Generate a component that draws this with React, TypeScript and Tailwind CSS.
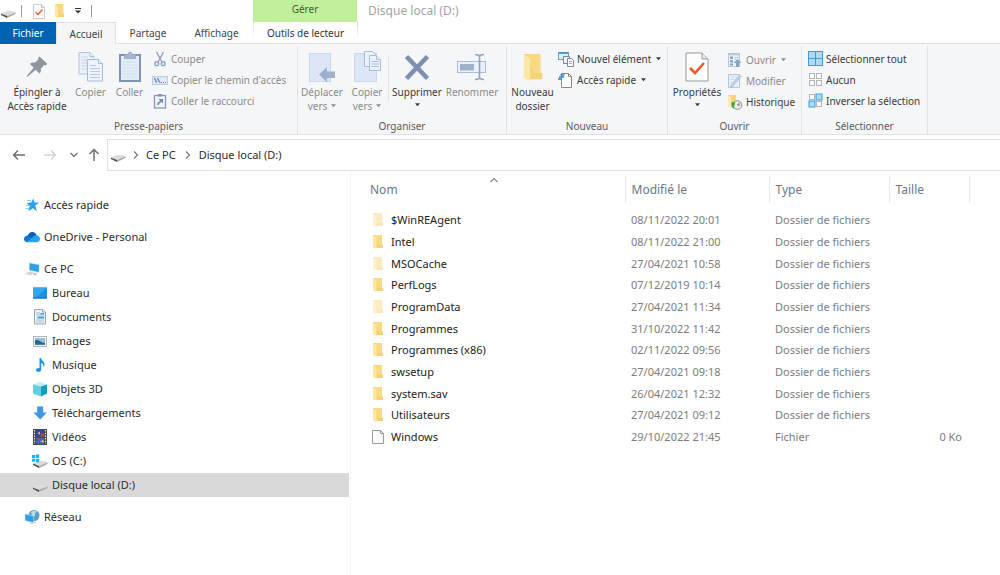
import type { ReactNode } from 'react'

type IconProps = { className?: string }

function DriveIcon({ className = 'w-4 h-4' }: IconProps) {
  return (
    <svg viewBox="0 0 16 16" className={className}>
      <path d="M1 10.500 7 8h5l3.500 1.500L7 13z" fill="#dcdcdc" />
      <path d="M1 10.500v1.500l6 3v-2z" fill="#4b4b4b" />
      <path d="m7 13 8.500-3.500V11L7 15z" fill="#a9a9a9" />
      <path d="m2 11.500 1.500.700" stroke="#57d36a" strokeWidth="0.800" />
    </svg>
  )
}

function OsDriveIcon() {
  return (
    <svg viewBox="0 0 16 16" className="w-4 h-4">
      <path d="M1 10.500 7 8h5l3.500 1.500L7 13z" fill="#dcdcdc" />
      <path d="M1 10.500v1.500l6 3v-2z" fill="#4b4b4b" />
      <path d="m7 13 8.500-3.500V11L7 15z" fill="#a9a9a9" />
      <path d="M0 2h3.200v3H0zM3.900 1.500h3.300V5H3.900zM0 5.700h3.200v3H0zM3.900 5.700h3.300v3.500H3.900z" fill="#12b5ee" />
    </svg>
  )
}

function FolderIcon({ className = 'w-3 h-4' }: IconProps) {
  return (
    <svg viewBox="0 0 12 16" preserveAspectRatio="none" className={className}>
      <path d="M1 1h9v9.500l1 .500v3H3z" fill="#f6d074" />
      <path d="M3 1h7v10H6z" fill="#fad982" />
      <path d="m1 1 3.500 2.500v11.500L1 13.500z" fill="#fde7a8" />
    </svg>
  )
}

function CheckPageIcon({ className }: IconProps) {
  return (
    <svg viewBox="0 0 24 30" className={className}>
      <path d="M1 1h16l6 6v22H1z" fill="#fdfdfd" stroke="#989898" />
      <path d="M17 1v6h6" fill="#e6e6e6" stroke="#989898" />
      <path d="m5 16 5 5 9-10" fill="none" stroke="#f15a24" strokeWidth="2.600" />
    </svg>
  )
}

function PinIcon() {
  return (
    <svg viewBox="0 0 24 24" className="w-6 h-6">
      <path
        d="M15.500 2.500 22.500 9l-1.700 1.300-1.600-.3-3.500 3.700c.5 1.700.2 3.300-1.200 4.700l-3.800-3.700-8.300 7-.7-.7 7-8.300-3.700-3.700c1.400-1.400 3-1.800 4.800-1.300L13.500 4.300l-.3-1.600L14.500 1.500z"
        fill="#8b959e"
      />
    </svg>
  )
}

function CopyIcon() {
  return (
    <svg viewBox="0 0 26 32" className="w-[26px] h-8">
      <g fill="#eaf1fa" stroke="#b1c2dc">
        <path d="M1 1.500h11l4 4V23H1z" />
        <path d="M12 1.500v4h4" />
      </g>
      <path d="M3.500 6h6M3.500 9h10M3.500 12h7M3.500 15h7M3.500 18h7" stroke="#c0d0e6" />
      <g fill="#edf3fb" stroke="#a9bbd6">
        <path d="M9.500 8.500h11l4 4V30h-15z" />
        <path d="M20.500 8.500v4h4" />
      </g>
      <path d="M12 14.500h6M12 17.500h10M12 20.500h10M12 23.500h10M12 26.500h10" stroke="#b8cae3" />
    </svg>
  )
}

function PasteIcon() {
  return (
    <svg viewBox="0 0 24 32" className="w-6 h-8">
      <rect x="2" y="4" width="20" height="26" fill="#e3ecf9" stroke="#8093b5" strokeWidth="2" />
      <path d="M6.500 3.500H10Q10.500 1 12 1t2.500 2.500h3v4h-11z" fill="#a9b8d0" stroke="#8e9fbd" strokeWidth="0.800" />
      <path d="M4.500 11h15M4.500 14h15M4.500 17h15M4.500 20h15M4.500 23h15M4.500 26h15" stroke="#d3e0f2" />
    </svg>
  )
}

function CutIcon() {
  return (
    <svg viewBox="0 0 16 16" className="w-4 h-4" fill="none" stroke="#93a2bd" strokeWidth="1.400">
      <path d="m4.500 1 5.500 10M11.500 1 6 11" />
      <circle cx="4.800" cy="12.700" r="1.900" />
      <circle cx="11.200" cy="12.700" r="1.900" />
    </svg>
  )
}

function CopyPathIcon() {
  return (
    <svg viewBox="0 0 16 16" className="w-4 h-4">
      <rect x="0.500" y="4.500" width="15" height="8" fill="#e1e9f5" stroke="#bccbe2" />
      <path d="m2.500 6 2 4.500M5.500 6l2 4.500" stroke="#62789f" strokeWidth="1.200" />
      <path d="M8.500 10.500h1.500M11 10.500h1M13 10.500h1" stroke="#62789f" />
    </svg>
  )
}

function PasteLinkIcon() {
  return (
    <svg viewBox="0 0 16 16" className="w-4 h-4">
      <rect x="2.500" y="2.500" width="11" height="12.500" fill="#eef4fc" stroke="#8698b8" strokeWidth="1.300" />
      <path d="M6 1h4v2.500H6z" fill="#8698b8" />
      <path d="M6 12c0-2 1-3 3-3.200" fill="none" stroke="#6f86ac" strokeWidth="1.500" />
      <path d="M6.500 6H11v4.500z" fill="#6f86ac" />
    </svg>
  )
}

function MoveToIcon() {
  return (
    <svg viewBox="0 0 28 32" className="w-7 h-8">
      <rect x="1.500" y="2.500" width="21" height="28" fill="#dce6f4" stroke="#cbd8ea" />
      <path d="M11 23.500 19 16v4.500h8v6.500h-8v4.500z" fill="#9fb0ca" />
    </svg>
  )
}

function CopyToIcon() {
  return (
    <svg viewBox="0 0 28 32" className="w-7 h-8">
      <rect x="1.500" y="2.500" width="22" height="28" fill="#dce6f4" stroke="#cbd8ea" />
      <g fill="#eaf1fa" stroke="#aabbd5">
        <path d="M11.500.500h8l3 3v12h-11z" />
        <path d="M16.500 4.500h7l4 4v11h-11z" />
        <path d="M23.500 4.500v4h4" />
      </g>
      <path d="M18.500 10.500h7M18.500 13h7M18.500 15.500h7" stroke="#aabbd5" />
    </svg>
  )
}

function DeleteIcon() {
  return (
    <svg viewBox="0 0 28 32" className="w-7 h-8">
      <path d="m3.500 5.500 21 22M24.500 5.500l-21 22" stroke="#7c8fb0" strokeWidth="4.600" />
    </svg>
  )
}

function RenameIcon() {
  return (
    <svg viewBox="0 0 30 32" className="w-[30px] h-8">
      <rect x="0.500" y="10.500" width="28" height="11" fill="#eaf1fa" stroke="#a9bbd6" />
      <rect x="3" y="13" width="14" height="6.500" fill="#9fb0cb" />
      <path d="M18 3.500q4.500 0 4.500 2.500v20q0 2.500-4.500 2.500M27 3.500q-4.500 0-4.500 2.500v20q0 2.500 4.500 2.500" fill="none" stroke="#93a4c0" strokeWidth="1.600" />
    </svg>
  )
}

function NewItemIcon() {
  return (
    <svg viewBox="0 0 16 16" className="w-4 h-4">
      <rect x="0.500" y="1.500" width="10" height="7" fill="#d7eefa" stroke="#729cb4" />
      <path d="M1 2h9" stroke="#3993c4" strokeWidth="1.600" />
      <path d="M5.500 5.500h6v7h-6z" fill="#eff6fb" stroke="#7c8992" />
      <path d="M9.500 7.500h4l2 2v6h-6z" fill="#fff" stroke="#858585" />
      <path d="M11 10.500h3M11 12.500h3" stroke="#d992a5" />
    </svg>
  )
}

function EasyAccessIcon() {
  return (
    <svg viewBox="0 0 16 16" className="w-4 h-4">
      <path d="M3.500 1.500h7l3 3v11h-10z" fill="#fff" stroke="#8a8a8a" />
      <path d="M10.500 1.500v3h3" fill="none" stroke="#8a8a8a" />
      <path d="M2.500 3h4M1 5h5M0 7h4" stroke="#2f86cc" strokeWidth="1.300" />
    </svg>
  )
}

function OpenIcon() {
  return (
    <svg viewBox="0 0 16 16" className="w-4 h-4">
      <rect x="1.500" y="1.500" width="11" height="13" fill="#edf3fb" stroke="#b4c4dc" />
      <path d="M2 2.800h10" stroke="#a9bbd6" />
      <path d="M3 4.500h3v2.500H3zM3 8h3v2.500H3zM3 11.500h3v2H3z" fill="#8ea3c4" />
      <path d="M7.500 5.500h4M7.500 7.500h2" stroke="#b4c4dc" />
      <path d="m10.500 7 4 4H12v4H9v-4H6.500z" fill="#8ea0bf" />
    </svg>
  )
}

function EditIcon() {
  return (
    <svg viewBox="0 0 16 16" className="w-4 h-4">
      <path d="M1.500 1.500h11v13h-11z" fill="#e9f0fa" stroke="#b4c4dc" />
      <path d="M3.500 4h5M3.500 6.500h4M3.500 9h2" stroke="#d0dcec" />
      <path d="M12.500 2 4.500 11.500 3.500 14l2.500-1L14 3.500z" fill="#c6d4e9" stroke="#a0b3d1" strokeWidth="0.800" />
    </svg>
  )
}

function HistoryIcon() {
  return (
    <svg viewBox="0 0 16 16" className="w-4 h-4">
      <path d="M1 1h8v12H3L1 12z" fill="#f8d472" />
      <path d="m1 1 3 2v11.500L1 13z" fill="#fdebb5" />
      <circle cx="10.500" cy="11" r="4.300" fill="#e6eee6" stroke="#929292" />
      <path d="M10.500 11 13 8.500M10.500 11h2.500" stroke="#737373" />
      <path d="M4 8.500 8 8l-.5 4-1.200-1C6 13 7 14.500 8.500 15 5.500 15 4 12.500 4.800 9.800z" fill="#26a544" />
    </svg>
  )
}

type SelectIconProps = { filled: boolean[]; joined?: boolean }

function SelectIcon({ filled, joined }: SelectIconProps) {
  const size = joined ? 7 : 5
  const corners = joined
    ? [[0.5, 0.5], [7.5, 0.5], [0.5, 7.5], [7.5, 7.5]]
    : [[1.5, 1.5], [8.5, 1.5], [1.5, 8.5], [8.5, 8.5]]
  return (
    <svg viewBox="0 0 15 15" className="w-[15px] h-[15px]">
      {corners.map(([x, y], i) => (
        <rect
          key={i}
          x={filled[i] && !joined ? x - 0.5 : x}
          y={filled[i] && !joined ? y - 0.5 : y}
          width={filled[i] && !joined ? 6 : size}
          height={filled[i] && !joined ? 6 : size}
          fill={filled[i] ? '#a9dcfb' : '#fafafa'}
          stroke={filled[i] ? '#3d9bdc' : '#b5b5b5'}
        />
      ))}
    </svg>
  )
}

function StarIcon() {
  return (
    <svg viewBox="0 0 16 16" className="w-4 h-4">
      <path d="m9.300 1.500 1.200 4.100 4.700.200-4 2.700 1.800 5.800-4-3-4.800 3 1.700-5.200L2.500 5.900l4.700-.300z" fill="#2ba0ec" />
      <path d="M3 3.500h4M2 8.500h4M1.500 11.500h4" stroke="#77c3f5" strokeWidth="0.900" />
    </svg>
  )
}

function CloudIcon() {
  return (
    <svg viewBox="0 0 16 16" className="w-4 h-4">
      <path d="M3.500 7.500C4 4.500 6 3 8.200 3c2 0 3.800 1.200 4.500 3.300l-6 5z" fill="#0a5fb8" />
      <path d="M3.500 6.500C1.500 6.500 0 8 0 10c0 1.800 1.500 3.200 3.300 3.200L9 9z" fill="#1277d0" />
      <path d="M12.200 6.200C14.400 6.200 16 7.800 16 9.800s-1.500 3.400-3.300 3.400H3.300L10 7z" fill="#28a4ea" />
    </svg>
  )
}

function ComputerIcon() {
  return (
    <svg viewBox="0 0 16 16" className="w-4 h-4">
      <path d="m5 1.500 10.500 2V12L5 9.500z" fill="#cfe2ee" />
      <path d="m5.600 2.200 9.300 1.900v6.900L5.600 9z" fill="#2f9fe6" />
      <path d="m1 12.500 5-2 5 1.500-5 2.500z" fill="#d2d6da" />
      <path d="m9 13 2-1 2.500 1-2.500 1.500z" fill="#b8bdc2" />
    </svg>
  )
}

function DesktopIcon() {
  return (
    <svg viewBox="0 0 16 16" className="w-4 h-4">
      <rect x="1" y="2.500" width="14" height="11" fill="#1c8fe0" />
      <path d="M1 2.500h14L4 12.500H1z" fill="#35a7f2" />
      <path d="M1 13h14" stroke="#0f6cb8" />
    </svg>
  )
}

function DocumentsIcon() {
  return (
    <svg viewBox="0 0 16 16" className="w-4 h-4">
      <path d="M2.500.500h8L13.500 3v12h-11z" fill="#f0f3f5" stroke="#9aa3aa" />
      <path d="M10.500.500V3h3" fill="#fff" stroke="#9aa3aa" />
      <path d="M4 4h4M4 6h8M4 11h8M4 13h8" stroke="#a3bccd" />
      <path d="M5.500 7.500H12v2H5.500zM8.500 4H12v1.500H8.500z" fill="#3aa0e0" />
    </svg>
  )
}

function PicturesIcon() {
  return (
    <svg viewBox="0 0 16 16" className="w-4 h-4">
      <rect x="1.500" y="3.500" width="13" height="10" fill="#f5f5f5" stroke="#b3b3b3" />
      <path d="M3 5h10v4H3z" fill="#86c3ec" />
      <path d="M3 7.500q2-1 4.500.5T13 9.500V12H3z" fill="#2f6269" />
      <path d="m3 10.500 10 .5v1H3z" fill="#3a85bd" />
    </svg>
  )
}

function MusicIcon() {
  return (
    <svg viewBox="0 0 16 16" className="w-4 h-4">
      <path d="M7.500 1H9c.2 2.500 3.500 3.500 3.500 6.500 0 1.200-.5 2-1 2.800.2-2.300-.8-3.600-2.300-4.200v6.500C9.200 14 8 15 6.300 15 5 15 4 14.200 4 13.100 4 11.700 5.500 10.800 7.500 11z" fill="#1a94e6" />
    </svg>
  )
}

function CubeIcon() {
  return (
    <svg viewBox="0 0 16 16" className="w-4 h-4">
      <path d="M1 3.500 8 1l7 2.500-6 2z" fill="#bdeef5" />
      <path d="m1 3.500 8 2v10l-8-3z" fill="#5fd0e2" />
      <path d="m9 5.500 6-2v9l-6 3z" fill="#0d9cba" />
    </svg>
  )
}

function DownloadIcon() {
  return (
    <svg viewBox="0 0 16 16" className="w-4 h-4">
      <path d="M5.200 1.500h6v6h3.600L8.200 14.500 1.500 7.500h3.700z" fill="#3f96e3" />
    </svg>
  )
}

function VideoIcon() {
  return (
    <svg viewBox="0 0 16 16" className="w-4 h-4">
      <rect x="1" width="14" height="16" fill="#444" />
      <path d="M4 1h8v6.500H4z" fill="#2e4b9b" />
      <path d="M4 8.500h8V15H4z" fill="#3d63ba" />
      <path d="M5.500 4 8 2.500V6zM8 13l3-2.500 1 3z" fill="#efb52c" />
      <path d="M9 4.500h3v3H8.500zM5 9l3 1-2 2z" fill="#c9452f" />
      <path d="M2.500 1v14M13.500 1v14" stroke="#e8e8e8" strokeWidth="1.200" strokeDasharray="1.500 1.200" />
    </svg>
  )
}

function NetworkIcon() {
  return (
    <svg viewBox="0 0 16 16" className="w-4 h-4">
      <circle cx="10" cy="6.500" r="5.500" fill="#5f9dbd" />
      <path d="M7 3q4-2.500 6 0-3 1-2 3t-3 1z" fill="#b7dbea" />
      <path d="m6 14 5-1.500 1 1-4.500 1.500z" fill="#b7bec4" />
      <path d="m1 5 8.500 2v6.800L1 11.500z" fill="#2d9de5" stroke="#c1dfef" strokeWidth="0.600" />
    </svg>
  )
}

function FileIcon() {
  return (
    <svg viewBox="0 0 12 16" className="w-3 h-4">
      <path d="M.500 1.500h8l3 3v10H.500z" fill="#fafafa" stroke="#9a9a9a" />
      <path d="M8.500 1.500v3h3" fill="none" stroke="#9a9a9a" />
    </svg>
  )
}

function Caret() {
  return (
    <svg viewBox="0 0 6 4" className="inline-block w-[5px] h-1 shrink-0" fill="currentColor">
      <path d="M0 0h6L3 3.500z" />
    </svg>
  )
}

function Chevron({ className = '' }: IconProps) {
  return (
    <svg viewBox="0 0 8 8" className={`w-2 h-2 shrink-0 ${className}`} fill="none" stroke="currentColor" strokeWidth="1.200">
      <path d="m2 .500 3.500 3.500L2 7.500" />
    </svg>
  )
}

function NavArrow({ className = '' }: IconProps) {
  return (
    <svg viewBox="0 0 14 14" className={`w-[14px] h-[14px] ${className}`} fill="none" stroke="currentColor" strokeWidth="1.400">
      <path d="M13 7H1.500M6 2.500 1.500 7 6 11.500" />
    </svg>
  )
}

type GroupProps = { label: string; className: string; children: ReactNode }

function RibbonGroup({ label, className, children }: GroupProps) {
  return (
    <section className={`flex flex-col justify-between shrink-0 border-r border-[#e2e3e4] ${className}`}>
      <div className="flex">{children}</div>
      <h2 className="text-center leading-4 text-[#5a5a5a]">{label}</h2>
    </section>
  )
}

type BigButtonProps = {
  icon: ReactNode
  lines: string[]
  className: string
  disabled?: boolean
  caret?: boolean
}

function BigButton({ icon, lines, className, disabled, caret }: BigButtonProps) {
  return (
    <button
      type="button"
      disabled={disabled}
      className={`flex flex-col items-center shrink-0 pt-[3px] text-[#3a3a3a] disabled:text-[#8b8b8b] ${className}`}
    >
      <span className="flex items-center justify-center h-9">{icon}</span>
      {lines.map((line, i) => (
        <span key={line} className="flex items-center gap-1 leading-[14px] whitespace-nowrap">
          {line}
          {caret && lines.length > 1 && i === lines.length - 1 && <Caret />}
        </span>
      ))}
      {caret && lines.length === 1 && (
        <span className="flex items-center h-3">
          <Caret />
        </span>
      )}
    </button>
  )
}

type SmallButtonProps = { icon: ReactNode; label: string; disabled?: boolean; caret?: boolean }

function SmallButton({ icon, label, disabled, caret }: SmallButtonProps) {
  return (
    <button
      type="button"
      disabled={disabled}
      className="flex items-center gap-[3px] h-[21px] whitespace-nowrap text-[#3a3a3a] disabled:text-[#8b8b8b]"
    >
      {icon}
      {label}
      {caret && (
        <span className="flex items-center pl-[2px]">
          <Caret />
        </span>
      )}
    </button>
  )
}

const places = [
  { name: 'Accès rapide', icon: <StarIcon />, root: true },
  { name: 'OneDrive - Personal', icon: <CloudIcon />, root: true },
  { name: 'Ce PC', icon: <ComputerIcon />, root: true },
  { name: 'Bureau', icon: <DesktopIcon /> },
  { name: 'Documents', icon: <DocumentsIcon /> },
  { name: 'Images', icon: <PicturesIcon /> },
  { name: 'Musique', icon: <MusicIcon /> },
  { name: 'Objets 3D', icon: <CubeIcon /> },
  { name: 'Téléchargements', icon: <DownloadIcon /> },
  { name: 'Vidéos', icon: <VideoIcon /> },
  { name: 'OS (C:)', icon: <OsDriveIcon /> },
  { name: 'Disque local (D:)', icon: <DriveIcon />, active: true },
  { name: 'Réseau', icon: <NetworkIcon />, root: true },
]

const files = [
  { name: '$WinREAgent', date: '08/11/2022 20:01', hidden: true },
  { name: 'Intel', date: '08/11/2022 21:00' },
  { name: 'MSOCache', date: '27/04/2021 10:58', hidden: true },
  { name: 'PerfLogs', date: '07/12/2019 10:14' },
  { name: 'ProgramData', date: '27/04/2021 11:34', hidden: true },
  { name: 'Programmes', date: '31/10/2022 11:42' },
  { name: 'Programmes (x86)', date: '02/11/2022 09:56' },
  { name: 'swsetup', date: '27/04/2021 09:18' },
  { name: 'system.sav', date: '26/04/2021 12:32' },
  { name: 'Utilisateurs', date: '27/04/2021 09:12' },
  { name: 'Windows', date: '29/10/2022 21:45', size: '0 Ko' },
]

function TitleBar() {
  return (
    <header className="flex h-[22px] items-center">
      <div className="flex items-center w-[253px] shrink-0">
        <DriveIcon />
        <span className="h-3 ml-[5px] border-l border-[#9a9a9a]" />
        <button type="button" aria-label="Propriétés" className="ml-[11px]">
          <CheckPageIcon className="w-3 h-[15px]" />
        </button>
        <button type="button" aria-label="Nouveau dossier" className="ml-[9px]">
          <FolderIcon className="w-[11px] h-4" />
        </button>
        <button type="button" aria-label="Personnaliser" className="ml-[10px]">
          <svg viewBox="0 0 6 6" className="w-[6px] h-[6px]">
            <path d="M0 .500h6" stroke="#333" />
            <path d="M0 2.500h6L3 5.500z" fill="#333" />
          </svg>
        </button>
        <span className="h-3 ml-[10px] border-l border-[#9a9a9a]" />
      </div>
      <div className="flex items-center justify-center w-[104px] h-full shrink-0 bg-[#c0f09c] text-[10px] text-[#4a5a3c]">
        <span className="pb-1">Gérer</span>
      </div>
      <h1 className="pl-[11px] text-[12px] text-[#a3a3a3]">Disque local (D:)</h1>
    </header>
  )
}

function Tabs() {
  return (
    <nav className="flex h-[22px] text-[10px] text-[#444] shadow-[inset_0_-1px_0_#e0e1e2]">
      <button type="button" className="w-14 bg-[#0063b1] text-white">
        Fichier
      </button>
      <button type="button" className="w-[60px] border border-b-0 border-[#e0e1e2] bg-[#f5f6f7]">
        Accueil
      </button>
      <button type="button" className="w-16">
        Partage
      </button>
      <button type="button" className="w-[73px]">
        Affichage
      </button>
      <div className="w-px mb-1 bg-linear-to-b from-[#e0e1e2] to-white" />
      <button type="button" className="w-[103px] text-[#333]">
        Outils de lecteur
      </button>
      <div className="w-px mb-1 bg-linear-to-b from-[#d5d6d7] to-white" />
    </nav>
  )
}

function Ribbon() {
  return (
    <div className="flex h-[91px] pt-[2px] overflow-hidden bg-[#f5f6f7] border-b border-[#e0e1e2] text-[10px]">
      <RibbonGroup label="Presse-papiers" className="w-[298px]">
        <BigButton icon={<PinIcon />} lines={['Épingler à', 'Accès rapide']} className="ml-[2px] w-[70px]" />
        <BigButton disabled icon={<CopyIcon />} lines={['Copier']} className="w-[37px]" />
        <BigButton disabled icon={<PasteIcon />} lines={['Coller']} className="w-[41px]" />
        <div className="pl-[2px] pt-[2px]">
          <SmallButton disabled icon={<CutIcon />} label="Couper" />
          <SmallButton disabled icon={<CopyPathIcon />} label="Copier le chemin d'accès" />
          <SmallButton disabled icon={<PasteLinkIcon />} label="Coller le raccourci" />
        </div>
      </RibbonGroup>
      <RibbonGroup label="Organiser" className="w-[209px]">
        <BigButton disabled caret icon={<MoveToIcon />} lines={['Déplacer', 'vers']} className="w-[48px]" />
        <BigButton disabled caret icon={<CopyToIcon />} lines={['Copier', 'vers']} className="w-[42px]" />
        <div className="w-px h-11 mt-[11px] bg-[#e2e3e4]" />
        <BigButton caret icon={<DeleteIcon />} lines={['Supprimer']} className="w-[56px]" />
        <BigButton disabled icon={<RenameIcon />} lines={['Renommer']} className="w-[54px]" />
      </RibbonGroup>
      <RibbonGroup label="Nouveau" className="w-[161px]">
        <BigButton
          icon={<FolderIcon className="w-[22px] h-[31px]" />}
          lines={['Nouveau', 'dossier']}
          className="w-[51px]"
        />
        <div className="pt-[2px]">
          <SmallButton caret icon={<NewItemIcon />} label="Nouvel élément" />
          <SmallButton caret icon={<EasyAccessIcon />} label="Accès rapide" />
        </div>
      </RibbonGroup>
      <RibbonGroup label="Ouvrir" className="w-[134px]">
        <BigButton
          caret
          icon={<CheckPageIcon className="w-6 h-[30px]" />}
          lines={['Propriétés']}
          className="w-[58px]"
        />
        <div className="pl-px pt-[3px]">
          <SmallButton disabled caret icon={<OpenIcon />} label="Ouvrir" />
          <SmallButton disabled icon={<EditIcon />} label="Modifier" />
          <SmallButton icon={<HistoryIcon />} label="Historique" />
        </div>
      </RibbonGroup>
      <RibbonGroup label="Sélectionner" className="w-[126px]">
        <div className="pl-[6px] pt-[2px]">
          <SmallButton icon={<SelectIcon joined filled={[true, true, true, true]} />} label="Sélectionner tout" />
          <SmallButton icon={<SelectIcon filled={[false, false, false, false]} />} label="Aucun" />
          <SmallButton icon={<SelectIcon filled={[false, true, true, false]} />} label="Inverser la sélection" />
        </div>
      </RibbonGroup>
    </div>
  )
}

function AddressBar() {
  return (
    <div className="flex items-center h-8 mt-1 text-[#6a6a6a]">
      <div className="flex items-center w-[107px] shrink-0 pl-3">
        <button type="button" aria-label="Précédent">
          <NavArrow />
        </button>
        <button type="button" aria-label="Suivant" disabled className="ml-[17px] text-[#d3d3d3]">
          <NavArrow className="rotate-180" />
        </button>
        <button type="button" aria-label="Emplacements récents" className="ml-[13px]">
          <Chevron className="rotate-90" />
        </button>
        <button type="button" aria-label="Dossier parent" className="ml-[9px]">
          <NavArrow className="rotate-90" />
        </button>
      </div>
      <div className="flex items-center flex-1 h-full border border-r-0 border-[#e0e0e0] pl-[2px] text-[#2b2b2b]">
        <DriveIcon />
        <Chevron className="ml-[6px] text-[#777]" />
        <a href="#pc" className="ml-[6px]">
          Ce PC
        </a>
        <Chevron className="ml-[8px] text-[#777]" />
        <a href="#d" className="ml-[7px]">
          Disque local (D:)
        </a>
      </div>
    </div>
  )
}

function Sidebar() {
  return (
    <nav className="w-[351px] shrink-0 pt-[14px] pr-px border-r border-[#f5f5f5] text-[#2b2b2b]">
      {places.map((place) => (
        <a
          key={place.name}
          href="#"
          className={`flex items-center gap-1 h-6 ${place.root ? 'mt-2 pl-6' : 'pl-8'} ${
            place.active ? 'bg-[#d9d9d9]' : ''
          }`}
        >
          {place.icon}
          {place.name}
        </a>
      ))}
    </nav>
  )
}

function FileTable() {
  return (
    <main className="flex-1 pt-[5px]">
      <table className="table-fixed w-full border-collapse text-left">
        <colgroup>
          <col className="w-[274px]" />
          <col className="w-[144px]" />
          <col className="w-[120px]" />
          <col className="w-[80px]" />
          <col />
        </colgroup>
        <thead className="text-[12px]">
          <tr className="h-[27px] text-[#66788c]">
            <th className="relative pl-[19px] font-normal border-r border-[#e8e8e8]">
              <Chevron className="absolute left-[139px] top-0 -rotate-90 text-[#888]" />
              Nom
            </th>
            <th className="pl-[6px] font-normal border-r border-[#e8e8e8]">Modifié le</th>
            <th className="pl-[6px] font-normal border-r border-[#e8e8e8]">Type</th>
            <th className="pl-[6px] font-normal border-r border-[#e8e8e8]">Taille</th>
            <td />
          </tr>
        </thead>
        <tbody className="text-[#7c7c7c] before:block before:h-[6px]">
          {files.map((file) => (
            <tr key={file.name} className="h-[22px] nth-[3n]:h-[21px] leading-4">
              <td className="pl-[21px] text-[#222]">
                <div className="flex items-center gap-[7px]">
                  {file.size ? <FileIcon /> : <FolderIcon className={file.hidden ? 'w-3 h-4 opacity-50' : 'w-3 h-4'} />}
                  {file.name}
                </div>
              </td>
              <td className="pl-[6px]">{file.date}</td>
              <td className="pl-[6px]">{file.size ? 'Fichier' : 'Dossier de fichiers'}</td>
              <td className="pr-[7px] text-right">{file.size}</td>
              <td />
            </tr>
          ))}
        </tbody>
      </table>
    </main>
  )
}

export default function App() {
  return (
    <div className="flex flex-col min-h-screen bg-white font-['Noto_Sans',sans-serif] text-[11px] leading-4">
      <TitleBar />
      <Tabs />
      <Ribbon />
      <AddressBar />
      <div className="flex flex-1">
        <Sidebar />
        <FileTable />
      </div>
    </div>
  )
}
